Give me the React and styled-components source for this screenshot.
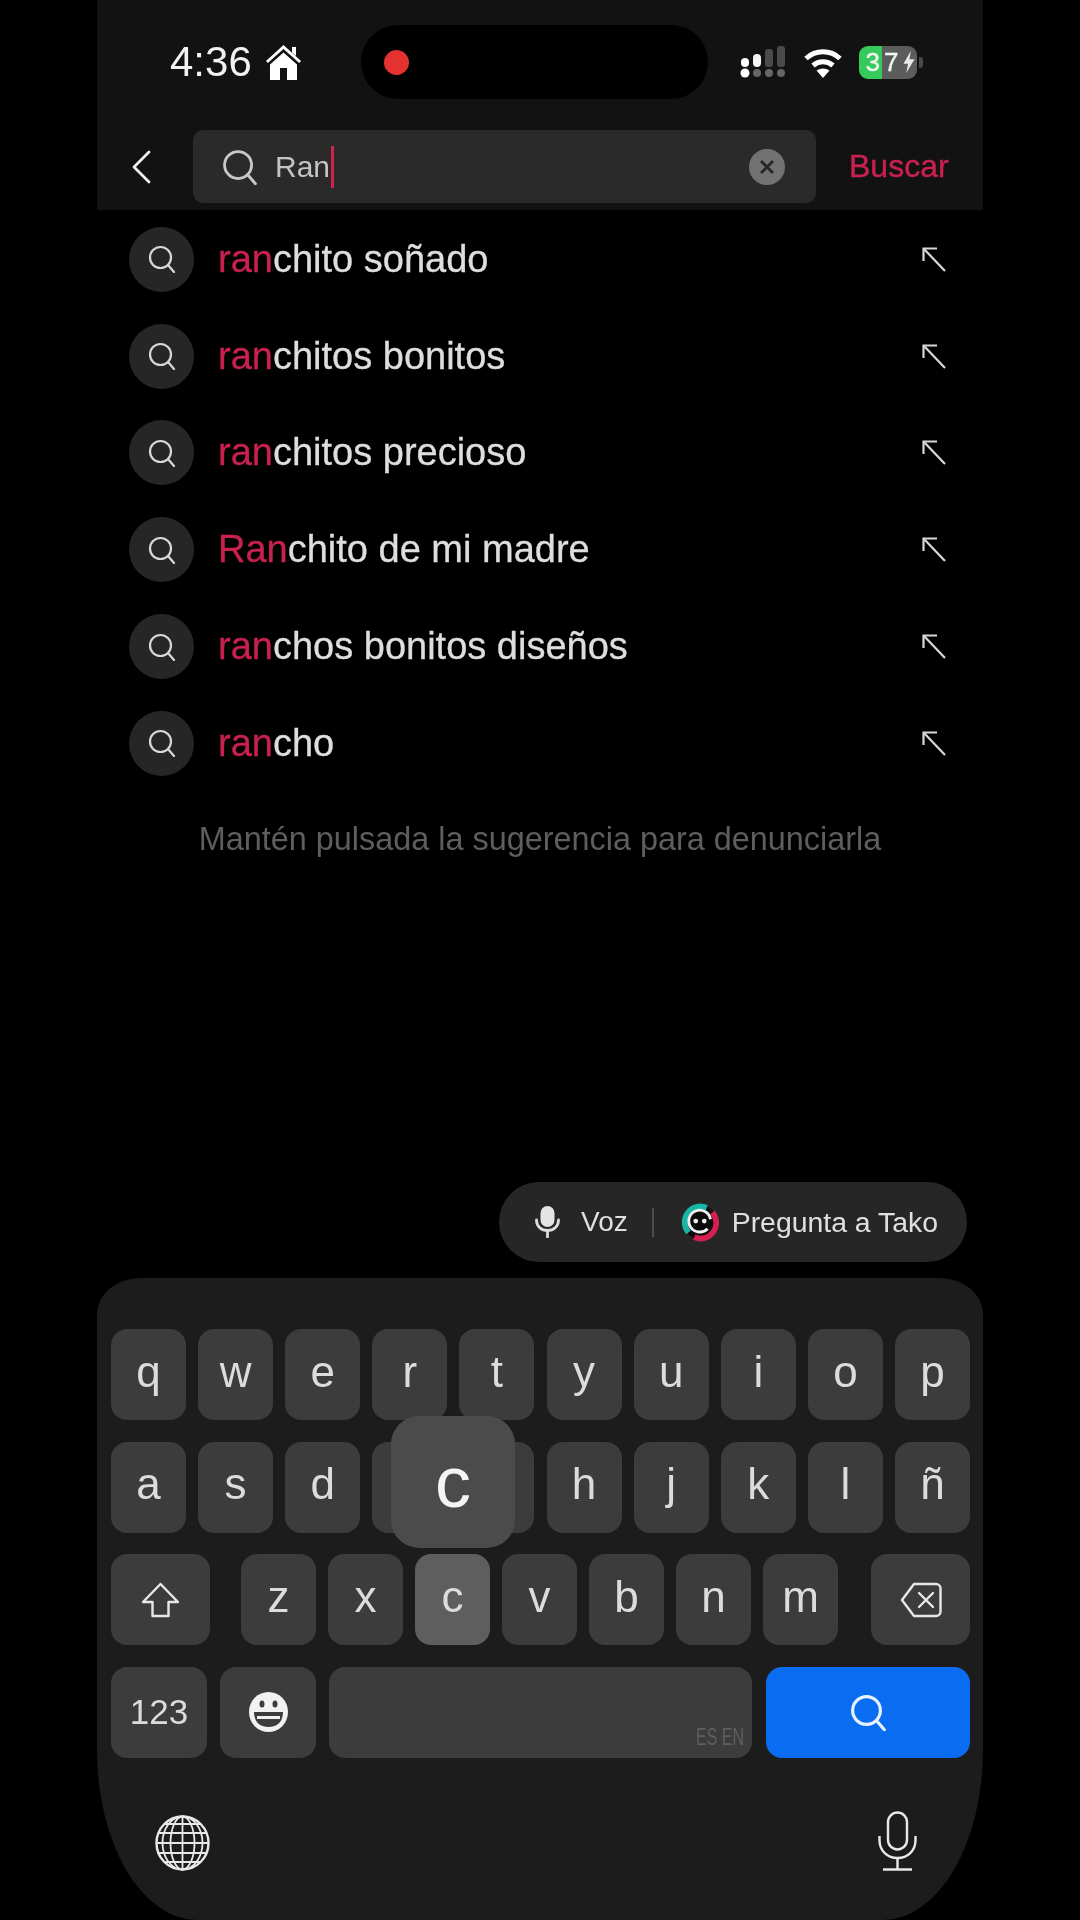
import React from "react"
import styled, { createGlobalStyle } from "styled-components"

const GlobalStyle = createGlobalStyle`
    html, body {
        margin: 0;
        padding: 0;
        background: #000;
    }
    body {
        font-family: "Liberation Sans", Arial, sans-serif;
    }
`

const SearchGlyph = ({ size, color = "#d8d8d8", weight = 2.2 }) => (
    <svg width={size} height={size} viewBox="0 0 28 28" fill="none" stroke={color} strokeWidth={weight} strokeLinecap="round">
        <circle cx="12.5" cy="12.5" r="10.5" />
        <path d="M20 20l6 7" />
    </svg>
)

const HomeIcon = () => (
    <svg width="37" height="36" viewBox="0 0 37 36" fill="#fff">
        <path d="M18.5 1L36 17l-1.800 2L18.500 5 2.800 19 1 17z" />
        <path d="M27 3h4v9l-4-3.500z" />
        <path fillRule="evenodd" d="M18.500 8.500L32 20.500V36H5V20.500zM15 24v12h7V24z" />
    </svg>
)

const SignalIcon = () => (
    <svg width="47" height="32" viewBox="0 0 47 32">
        <rect x="1" y="12" width="8" height="9" rx="4" fill="#fff" />
        <rect x="13" y="8" width="8" height="13" rx="4" fill="#f4f4f4" />
        <rect x="25" y="3" width="8" height="18" rx="3" fill="#4a4a4a" />
        <rect x="37" y="0" width="8" height="21" rx="3" fill="#4a4a4a" />
        <circle cx="5" cy="27" r="4.500" fill="#fff" />
        <circle cx="17" cy="27" r="4" fill="#666" />
        <circle cx="29" cy="27" r="4" fill="#666" />
        <circle cx="41" cy="27" r="4" fill="#666" />
    </svg>
)

const WifiIcon = () => (
    <svg width="40" height="31" viewBox="0 0 40 31" fill="none" stroke="#fff" strokeWidth="5">
        <path d="M3 11.500C12.500 2.500 27.500 2.500 37 11.500" />
        <path d="M10 18.500c5.800-5 14.200-5 20 0" />
        <path d="M20 31l-6.500-7.500c3.800-2.800 9.200-2.800 13 0z" fill="#fff" stroke="none" />
    </svg>
)

const BoltIcon = () => (
    <svg width="12" height="22" viewBox="0 0 12 24" fill="#e8e8e8">
        <path d="M8 0L0 14h5l-2 10 9-15H6.500z" />
    </svg>
)

const BackChevron = () => (
    <svg width="20" height="34" viewBox="0 0 20 34" fill="none" stroke="#f0f0f0" strokeWidth="2.800" strokeLinecap="round" strokeLinejoin="round">
        <path d="M18 2L3 17l15 15" />
    </svg>
)

const FillArrow = () => (
    <svg width="25" height="25" viewBox="0 0 25 25" fill="none" stroke="#d8d8d8" strokeWidth="2.200">
        <path d="M1.500 14V1.500H15" />
        <path d="M2 2l21 22" />
    </svg>
)

const VoiceMic = () => (
    <svg width="25" height="32" viewBox="0 0 25 32" fill="none" stroke="#dcdcdc" strokeWidth="2.800" strokeLinecap="round">
        <rect x="5.500" y="0" width="14" height="21" rx="7" fill="#e4e4e4" stroke="none" />
        <path d="M1.500 14c0 6.500 5 10.500 11 10.500s11-4 11-10.500" />
        <path d="M12.500 25v6" />
    </svg>
)

const TakoLogo = () => (
    <svg width="38" height="40" viewBox="0 0 40 40" fill="none">
        <circle cx="20" cy="20" r="18" fill="#0b0b0b" />
        <path d="M8 31A16.500 16.500 0 0 1 27 5" stroke="#19b5a6" strokeWidth="6" />
        <path d="M33 10A16.500 16.500 0 0 1 14 36" stroke="#d41f51" strokeWidth="6" />
        <path d="M28 27A11.500 11.500 0 1 1 31 17" stroke="#f0f0f0" strokeWidth="3" />
        <circle cx="15.500" cy="19" r="2.500" fill="#eee" />
        <circle cx="24.500" cy="19" r="2.500" fill="#eee" />
    </svg>
)

const ShiftIcon = () => (
    <svg width="39" height="36" viewBox="0 0 39 36" fill="none" stroke="#e8e8e8" strokeWidth="2.400" strokeLinejoin="round">
        <path d="M19.500 2L37 20H27.500v14h-16V20H2z" />
    </svg>
)

const BackspaceIcon = () => (
    <svg width="42" height="36" viewBox="0 0 42 36" fill="none" stroke="#e8e8e8" strokeWidth="2.400" strokeLinejoin="round" strokeLinecap="round">
        <path d="M14 2h22a4.500 4.500 0 0 1 4.500 4.500v23A4.500 4.500 0 0 1 36 34H14L2 18z" />
        <path d="M19 11l14 14M33 11L19 25" />
    </svg>
)

const EmojiIcon = () => (
    <svg width="39" height="40" viewBox="0 0 39 40">
        <ellipse cx="19.500" cy="20" rx="19.500" ry="20" fill="#f2f2f2" />
        <ellipse cx="13" cy="12" rx="2.500" ry="3.500" fill="#3c3c3c" />
        <ellipse cx="26" cy="12" rx="2.500" ry="3.500" fill="#3c3c3c" />
        <path d="M5 20h29c0 10-6 15-14.500 15S5 30 5 20z" fill="#3c3c3c" />
        <path d="M8 24h23v3H8z" fill="#f2f2f2" />
    </svg>
)

const GlobeIcon = () => (
    <svg width="55" height="56" viewBox="0 0 55 56" fill="none" stroke="#e8e8e8" strokeWidth="1.800">
        <ellipse cx="27.500" cy="28" rx="26" ry="26.500" strokeWidth="2.400" />
        <ellipse cx="27.500" cy="28" rx="12" ry="26.500" />
        <ellipse cx="27.500" cy="28" rx="20" ry="26.500" />
        <path d="M27.500 1.500v53M1.500 28h52M3.500 18h48M3.500 38h48M9 9h37M9 47h37" />
    </svg>
)

const KeyboardMic = () => (
    <svg width="39" height="60" viewBox="0 0 39 60" fill="none" stroke="#e8e8e8" strokeWidth="2.400">
        <rect x="10" y="1.500" width="19" height="37" rx="9.500" />
        <path d="M1.500 25v4c0 11 8 18 18 18s18-7 18-18v-4" />
        <path d="M19.500 47v11M5 58.500h29" />
    </svg>
)

const suggestions = [
    { hit: "ran", rest: "chito soñado" },
    { hit: "ran", rest: "chitos bonitos" },
    { hit: "ran", rest: "chitos precioso" },
    { hit: "Ran", rest: "chito de mi madre" },
    { hit: "ran", rest: "chos bonitos diseños" },
    { hit: "ran", rest: "cho" },
]

const topRow = ["q", "w", "e", "r", "t", "y", "u", "i", "o", "p"]
const middleRow = ["a", "s", "d", "f", "g", "h", "j", "k", "l", "ñ"]
const lowerRow = ["z", "x", "c", "v", "b", "n", "m"]

const App = () => {
    return (
        <Phone>
            <GlobalStyle />
            <Header>
                <StatusBar>
                    <StatusLeft>
                        <Clock>4:36</Clock>
                        <HomeIcon />
                    </StatusLeft>
                    <Island>
                        <RecordDot />
                    </Island>
                    <StatusRight>
                        <SignalIcon />
                        <WifiIcon />
                        <Battery>
                            <BatteryLevel>37</BatteryLevel>
                            <BoltIcon />
                        </Battery>
                    </StatusRight>
                </StatusBar>
                <SearchRow>
                    <BackChevron />
                    <SearchField>
                        <SearchGlyph size={36} color="#c8c8c8" />
                        <QueryText>Ran</QueryText>
                        <Caret />
                        <ClearButton>
                            <svg width="16" height="16" viewBox="0 0 16 16" stroke="#262626" strokeWidth="2.800">
                                <path d="M2 2l12 12M14 2L2 14" />
                            </svg>
                        </ClearButton>
                    </SearchField>
                    <SearchLink>Buscar</SearchLink>
                </SearchRow>
            </Header>

            <SuggestionList>
                {suggestions.map((item, i) => (
                    <SuggestionRow key={i}>
                        <RoundIcon>
                            <SearchGlyph size={28} />
                        </RoundIcon>
                        <SuggestionText>
                            <Hit>{item.hit}</Hit>
                            {item.rest}
                        </SuggestionText>
                        <FillArrow />
                    </SuggestionRow>
                ))}
            </SuggestionList>
            <Hint>Mantén pulsada la sugerencia para denunciarla</Hint>

            <VoiceBar>
                <VoiceMic />
                <VoiceLabel>Voz</VoiceLabel>
                <VoiceDivider />
                <TakoLogo />
                <TakoLabel>Pregunta a Tako</TakoLabel>
            </VoiceBar>

            <Keyboard>
                <KeyRows>
                    <KeyRow>
                        {topRow.map(k => <Key key={k}>{k}</Key>)}
                    </KeyRow>
                    <KeyRow>
                        {middleRow.map(k => <Key key={k}>{k === "f" || k === "g" ? "" : k}</Key>)}
                        <KeyPopup>c</KeyPopup>
                    </KeyRow>
                    <KeyRow>
                        <WideKey><ShiftIcon /></WideKey>
                        <LetterGroup>
                            {lowerRow.map(k => <Key key={k} $pressed={k === "c"}>{k}</Key>)}
                        </LetterGroup>
                        <WideKey><BackspaceIcon /></WideKey>
                    </KeyRow>
                    <KeyRow>
                        <ModeKey>123</ModeKey>
                        <ModeKey><EmojiIcon /></ModeKey>
                        <SpaceKey><SpaceLang>ES EN</SpaceLang></SpaceKey>
                        <GoKey><SearchGlyph size={37} color="#e8f1ff" weight={2.4} /></GoKey>
                    </KeyRow>
                </KeyRows>
                <KeyboardFooter>
                    <GlobeIcon />
                    <KeyboardMic />
                </KeyboardFooter>
            </Keyboard>
        </Phone>
    )
}

export default App

const Phone = styled.div`
    width: 886px;
    height: 1920px;
    margin: 0 auto;
    background: #000;
    display: flex;
    flex-direction: column;
    overflow: hidden;
    filter: blur(0.6px);
`
const Header = styled.header`
    height: 210px;
    box-sizing: border-box;
    padding-top: 25px;
    background: #121212;
    display: flex;
    flex-direction: column;
    gap: 31px;
`
const StatusBar = styled.div`
    display: grid;
    grid-template-columns: 264px 347px 1fr;
    height: 74px;
`
const StatusLeft = styled.div`
    display: flex;
    align-items: center;
    gap: 13px;
    padding-left: 73px;
`
const Clock = styled.span`
    color: #f2f2f2;
    font-size: 42px;
    line-height: 1;
`
const Island = styled.div`
    background: #000;
    border-radius: 37px;
    display: flex;
    align-items: center;
    padding-left: 23px;
`
const RecordDot = styled.span`
    width: 25px;
    height: 25px;
    border-radius: 50%;
    background: #e5312f;
`
const StatusRight = styled.div`
    display: flex;
    align-items: center;
    gap: 16px;
    padding-left: 32px;
`
const Battery = styled.div`
    position: relative;
    width: 58px;
    height: 33px;
    box-sizing: border-box;
    padding-left: 5px;
    border-radius: 9px;
    background: linear-gradient(90deg, #36c95c 0 40%, #5c5c5c 40%);
    display: flex;
    align-items: center;
    justify-content: center;
    gap: 1px;
    &::after {
        content: "";
        position: absolute;
        right: -6px;
        top: 11px;
        width: 4px;
        height: 11px;
        border-radius: 0 3px 3px 0;
        background: #4a4a4a;
    }
`
const BatteryLevel = styled.span`
    color: #eef8ee;
    font-size: 26px;
    letter-spacing: 4px;
    line-height: 1;
    -webkit-text-stroke: 0.4px;
`
const SearchRow = styled.div`
    display: flex;
    align-items: center;
    padding-left: 34px;
    gap: 42px;
`
const SearchField = styled.div`
    width: 623px;
    height: 73px;
    box-sizing: border-box;
    border-radius: 10px;
    background: #2a2a2a;
    display: flex;
    align-items: center;
    padding: 0 31px 0 29px;
`
const QueryText = styled.span`
    color: #c4c4c4;
    font-size: 30px;
    margin-left: 17px;
`
const Caret = styled.span`
    width: 3px;
    height: 42px;
    margin-left: 1px;
    background: #d4204f;
`
const ClearButton = styled.span`
    width: 36px;
    height: 36px;
    margin-left: auto;
    border-radius: 50%;
    background: #727272;
    display: flex;
    align-items: center;
    justify-content: center;
`
const SearchLink = styled.span`
    color: #c9214f;
    font-size: 32px;
    margin-left: -9px;
    -webkit-text-stroke: 0.4px #c9214f;
`
const SuggestionList = styled.ul`
    list-style: none;
    margin: 1px 0 0;
    padding: 0 36px 0 32px;
`
const SuggestionRow = styled.li`
    height: 96.800px;
    display: flex;
    align-items: center;
    gap: 24px;
`
const RoundIcon = styled.span`
    width: 65px;
    height: 65px;
    border-radius: 50%;
    background: #262626;
    display: flex;
    align-items: center;
    justify-content: center;
`
const SuggestionText = styled.span`
    flex: 1;
    color: #dedede;
    font-size: 38px;
    -webkit-text-stroke: 0.3px;
`
const Hit = styled.span`
    color: #c9214f;
`
const Hint = styled.p`
    margin: 27px 0 0;
    text-align: center;
    color: #5e5e5e;
    font-size: 32.400px;
    line-height: 40px;
`
const VoiceBar = styled.div`
    align-self: flex-end;
    margin: auto 16px 16px 0;
    width: 468px;
    height: 80px;
    box-sizing: border-box;
    padding-left: 36px;
    border-radius: 40px;
    background: #262626;
    display: flex;
    align-items: center;
`
const VoiceLabel = styled.span`
    color: #e0e0e0;
    font-size: 28px;
    margin-left: 21px;
`
const VoiceDivider = styled.span`
    width: 2px;
    height: 29px;
    margin: 0 27px 0 24px;
    background: #4c4c4c;
`
const TakoLabel = styled.span`
    color: #e0e0e0;
    font-size: 28.400px;
    margin-left: 13px;
`
const Keyboard = styled.div`
    height: 642px;
    box-sizing: border-box;
    padding-top: 51px;
    background: #1c1c1c;
    border-radius: 44px 44px 100px 100px / 36px 36px 170px 170px;
`
const KeyRows = styled.div`
    display: flex;
    flex-direction: column;
    gap: 21.500px;
    padding: 0 13px 0 14px;
`
const KeyRow = styled.div`
    position: relative;
    display: flex;
    justify-content: space-between;
    height: 91px;
`
const Key = styled.div`
    width: 75px;
    height: 91px;
    padding-bottom: 6px;
    box-sizing: border-box;
    border-radius: 16px;
    background: ${props => props.$pressed ? "#5e5e5e" : "#3c3c3c"};
    color: #dcdcdc;
    font-size: 44px;
    display: flex;
    align-items: center;
    justify-content: center;
`
const KeyPopup = styled.div`
    position: absolute;
    left: 280px;
    top: -26px;
    width: 124px;
    height: 132px;
    border-radius: 28px;
    background: #4b4b4b;
    color: #f4f4f4;
    font-size: 72px;
    display: flex;
    align-items: center;
    justify-content: center;
`
const LetterGroup = styled.div`
    display: flex;
    gap: 12px;
    margin-left: -2px;
`
const WideKey = styled(Key)`
    width: 99px;
    padding-bottom: 0;
`
const ModeKey = styled(Key)`
    width: 96px;
    font-size: 35px;
    padding-bottom: 0;
    margin-right: -1px;
`
const SpaceKey = styled(Key)`
    position: relative;
    width: 423px;
`
const SpaceLang = styled.span`
    position: absolute;
    right: 8px;
    bottom: 9px;
    color: #5e5e5e;
    font-size: 20px;
    line-height: 1;
    transform: scale(0.800, 1.200);
    transform-origin: bottom right;
`
const GoKey = styled(Key)`
    width: 204px;
    padding-bottom: 0;
    background: #0a6cf0;
`
const KeyboardFooter = styled.div`
    display: flex;
    justify-content: space-between;
    align-items: flex-end;
    margin-top: 53px;
    padding: 0 66px 0 58px;
`
